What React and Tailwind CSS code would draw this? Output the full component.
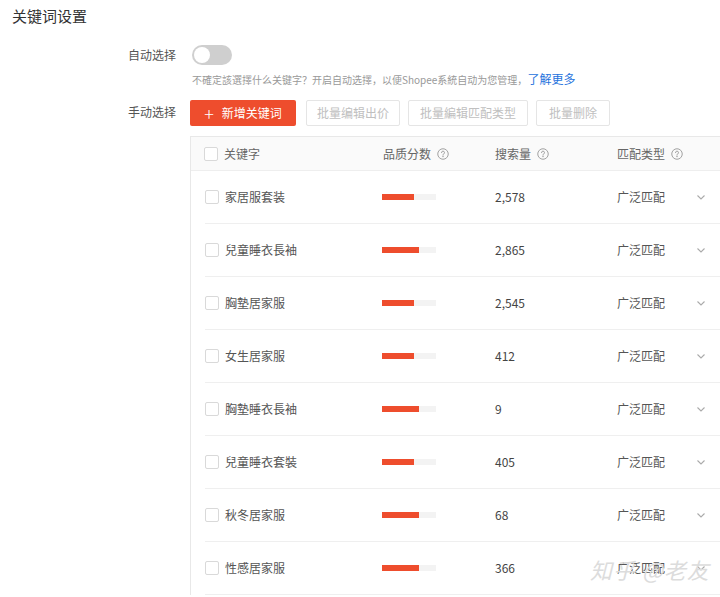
import React from 'react';

const ROWS = [
   { kw: '家居服套装', score: 32, vol: '2,578' },
   { kw: '兒童睡衣長袖', score: 37, vol: '2,865' },
   { kw: '胸墊居家服', score: 32, vol: '2,545' },
   { kw: '女生居家服', score: 32, vol: '412' },
   { kw: '胸墊睡衣長袖', score: 37, vol: '9' },
   { kw: '兒童睡衣套裝', score: 32, vol: '405' },
   { kw: '秋冬居家服', score: 37, vol: '68' },
   { kw: '性感居家服', score: 37, vol: '366' },
];

function HelpIcon() {
   return (
      <svg width="12" height="12" viewBox="0 0 16 16" fill="none" stroke="#999" strokeWidth="1.2" className="ml-1.5">
         <circle cx="8" cy="8" r="7" />
         <path d="M6 6.2a2 2 0 1 1 2.6 1.9c-.4.2-.6.5-.6.9v.6" strokeLinecap="round" />
         <circle cx="8" cy="11.6" r=".4" fill="#999" />
      </svg>
   );
}

function Checkbox() {
   return <span className="w-[14px] h-[14px] border border-[#d9d9d9] rounded-[2px] bg-white shrink-0" />;
}

function Chevron() {
   return (
      <svg width="12" height="12" viewBox="0 0 12 12" fill="none" stroke="#aaa" strokeWidth="1.1">
         <path d="M2.5 4.5 6 8l3.5-3.5" />
      </svg>
   );
}

export default function App() {
   return (
      <div
         className="relative w-[720px] h-[597px] overflow-hidden bg-white text-[#333]"
         style={{ fontFamily: '"Noto Sans CJK SC", "Liberation Sans", sans-serif' }}
      >
         <h1 className="pl-3 pt-[6px] text-[15px] leading-[20px] text-[#333]">关键词设置</h1>

         {/* auto select */}
         <div className="flex mt-[19px]">
            <div className="w-[176px] text-right text-[12px] leading-[20px] text-[#555]">自动选择</div>
            <div className="ml-4">
               <div className="w-[40px] h-[20px] rounded-full bg-[#cfcfcf] flex items-center px-[2px]">
                  <span className="w-[16px] h-[16px] rounded-full bg-white" />
               </div>
               <p className="mt-[5px] text-[10px] leading-[18px] text-[#999]">
                  不確定該選擇什么关键字？开启自动选擇，以便Shopee系統自动为您管理，
                  <span className="text-[12px] text-[#2673dd]">了解更多</span>
               </p>
            </div>
         </div>

         {/* manual select */}
         <div className="flex mt-[11px]">
            <div className="w-[176px] text-right text-[12px] leading-[20px] text-[#555] pt-[2px]">手动选择</div>
            <div className="ml-[14px] flex-1 min-w-0">
               <div className="flex gap-2">
                  <button className="h-[26px] w-[106px] rounded-[2px] bg-[#ee4d2d] text-white text-[12px] flex items-center justify-center gap-2">
                     <span className="text-[18px] leading-none font-light">+</span>
                     新增关键词
                  </button>
                  <button className="h-[26px] ml-[2px] w-[94px] rounded-[2px] border border-[#e5e5e5] text-[#c0c0c0] text-[12px]">批量编辑出价</button>
                  <button className="h-[26px] w-[120px] rounded-[2px] border border-[#e5e5e5] text-[#c0c0c0] text-[12px]">批量編辑匹配类型</button>
                  <button className="h-[26px] w-[74px] rounded-[2px] border border-[#e5e5e5] text-[#c0c0c0] text-[12px]">批量删除</button>
               </div>

               <div className="mt-[10px] border-l border-t border-[#e8e8e8] w-[560px]">
                  <div className="h-[34px] bg-[#fafafa] flex items-center text-[12px] text-[#666] border-b border-[#eee]">
                     <div className="w-[192px] flex items-center gap-[6px] pl-[13px]">
                        <Checkbox />
                        <span>关键字</span>
                     </div>
                     <div className="w-[112px] flex items-center">品质分数<HelpIcon /></div>
                     <div className="w-[122px] flex items-center">搜索量<HelpIcon /></div>
                     <div className="flex items-center">匹配类型<HelpIcon /></div>
                  </div>
                  {ROWS.map((r) => (
                     <div key={r.kw} className="h-[53px] flex items-center text-[12px] ml-[14px] border-b border-[#efefef]">
                        <div className="w-[177px] flex items-center gap-[6px]">
                           <Checkbox />
                           <span className="text-[#555]">{r.kw}</span>
                        </div>
                        <div className="w-[113px]">
                           <div className="w-[54px] h-[6px] bg-[#f3f3f3]">
                              <div className="h-[6px] bg-[#ee4d2d]" style={{ width: r.score }} />
                           </div>
                        </div>
                        <div className="w-[122px] text-[#444]">{r.vol}</div>
                        <div className="w-[78px] text-[#555]">广泛匹配</div>
                        <Chevron />
                     </div>
                  ))}
               </div>
            </div>
         </div>

         <div className="absolute left-[590px] top-[554px] text-[22px] leading-[30px] text-[#dcdcdc] italic tracking-[1px]">
            知乎 @老友
         </div>
      </div>
   );
}
